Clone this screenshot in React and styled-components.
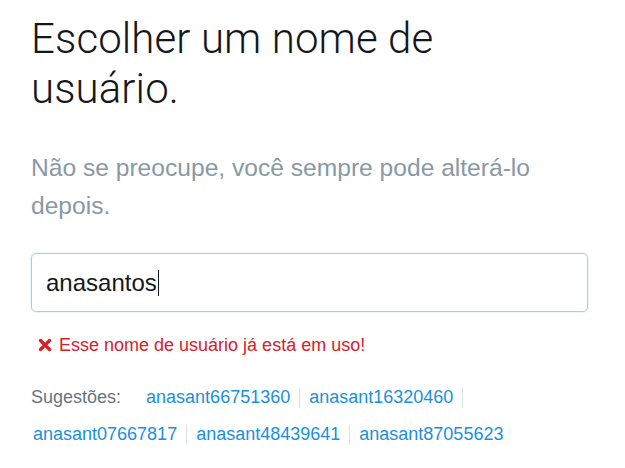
import styled, { createGlobalStyle } from 'styled-components';

const GlobalStyle = createGlobalStyle`
  html, body {
    margin: 0;
    padding: 0;
    background: #fff;
  }
  body {
    font-family: "Liberation Sans", Arial, sans-serif;
    -webkit-font-smoothing: antialiased;
  }
`

const StyledPage = styled.main`
  width: 557px;
  padding: 14px 0 0 31px;
`

const StyledTitle = styled.h1`
  max-width: 440px;
  font-family: Roboto, "Liberation Sans", sans-serif;
  font-weight: 300;
  font-size: 42px;
  letter-spacing: 0.1px;
  line-height: 50px;
  color: #14171a;
  margin: 0;
`

const StyledSubtitle = styled.p`
  font-size: 24.6px;
  line-height: 38px;
  color: #8899a6;
  margin: 35px 0 0;
`

const StyledField = styled.div`
  display: flex;
  align-items: center;
  box-sizing: border-box;
  height: 59px;
  margin-top: 28px;
  padding: 0 14px;
  border: 1px solid #9fd3f5;
  border-radius: 5px;
  box-shadow: 0 0 2px rgba(29, 161, 242, 0.35);
  font-size: 24px;
  color: #14171a;
`

const StyledCaret = styled.span`
  display: inline-block;
  width: 1px;
  height: 26px;
  margin-left: 1px;
  background: #14171a;
`

const StyledError = styled.div`
  display: flex;
  align-items: center;
  gap: 7px;
  margin: 21px 0 0 7px;
  font-size: 18px;
  line-height: 24px;
  color: #d9202a;

  & > svg {
    flex: none;
  }
`

const StyledSuggestions = styled.div`
  display: flex;
  flex-wrap: wrap;
  align-items: center;
  margin-top: 22px;
  font-size: 18px;
  line-height: 37px;
`

const StyledLabel = styled.span`
  color: #66757f;
  margin-right: 23px;
`

const StyledItem = styled.span`
  display: inline-flex;
  align-items: center;
`

const StyledLink = styled.a`
  color: #1b8fe0;
  text-decoration: none;
  padding: 0 2px;
  cursor: pointer;

  &:hover {
    text-decoration: underline;
  }
`

const StyledSep = styled.span`
  display: inline-block;
  width: 1px;
  height: 20px;
  margin: 0 7px;
  background: #dbe2e7;
`

const suggestions = [
  'anasant66751360',
  'anasant16320460',
  'anasant07667817',
  'anasant48439641',
  'anasant87055623',
]

const ErrorIcon = () => (
  <svg width="14" height="14" viewBox="0 0 14 14">
    <path d="M2.5 2.5 L11.5 11.5 M11.5 2.5 L2.5 11.5" stroke="#d9202a" strokeWidth="3.4" strokeLinecap="round" />
  </svg>
)

export default function App() {
  return (
    <>
      <GlobalStyle />
      <StyledPage>
        <StyledTitle>Escolher um nome de usuário.</StyledTitle>
        <StyledSubtitle>Não se preocupe, você sempre pode alterá-lo depois.</StyledSubtitle>
        <StyledField>
          anasantos
          <StyledCaret />
        </StyledField>
        <StyledError>
          <ErrorIcon />
          Esse nome de usuário já está em uso!
        </StyledError>
        <StyledSuggestions>
          <StyledLabel>Sugestões:</StyledLabel>
          {suggestions.map((name, i) => (
            <StyledItem key={name}>
              <StyledLink>{name}</StyledLink>
              {i < suggestions.length - 1 && <StyledSep />}
            </StyledItem>
          ))}
        </StyledSuggestions>
      </StyledPage>
    </>
  )
}
